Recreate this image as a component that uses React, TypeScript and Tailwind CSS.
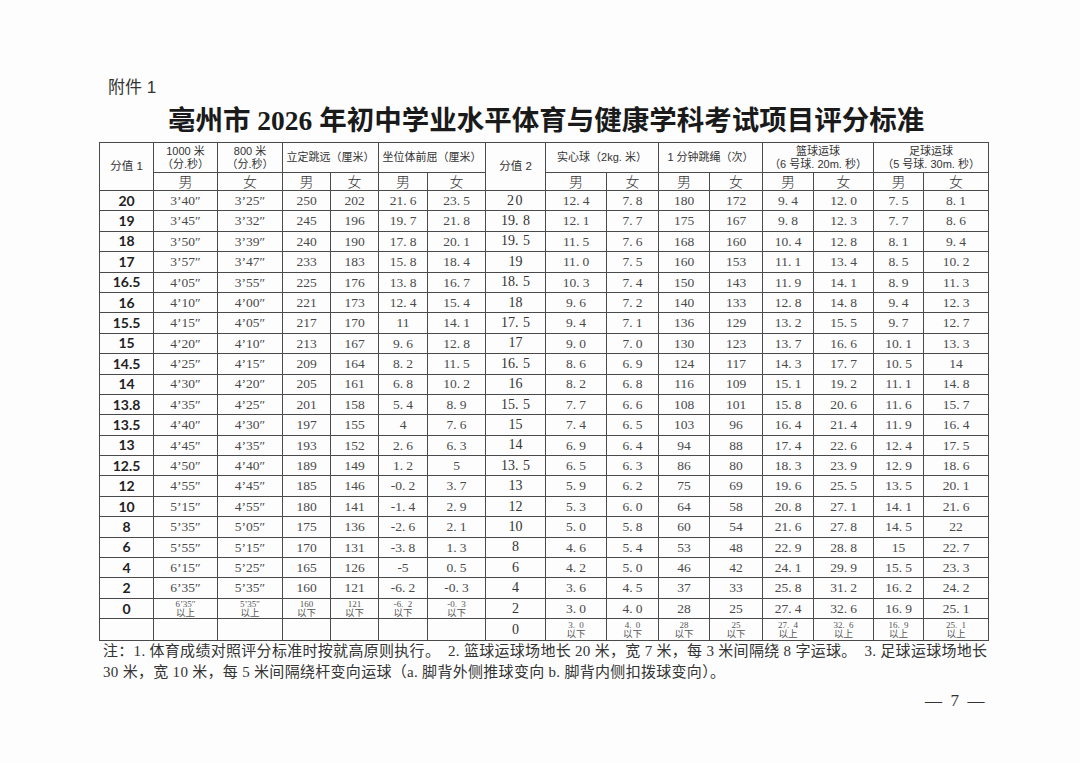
import React from "react";

const serif = "font-['Liberation_Serif','Noto_Sans_CJK_SC',serif]";
const sans = "font-['Liberation_Sans','Noto_Sans_CJK_SC',sans-serif]";

const colWidths = [54, 64, 65, 48, 48, 49, 58, 60, 61, 52, 51, 53, 51, 60, 50, 65];

// left half: 分值1, 1000米男, 800米女, 跳远男/女, 坐位体前屈男/女
const leftRows: string[][] = [
  ["20", "3’40″", "3’25″", "250", "202", "21.6", "23.5"],
  ["19", "3’45″", "3’32″", "245", "196", "19.7", "21.8"],
  ["18", "3’50″", "3’39″", "240", "190", "17.8", "20.1"],
  ["17", "3’57″", "3’47″", "233", "183", "15.8", "18.4"],
  ["16.5", "4’05″", "3’55″", "225", "176", "13.8", "16.7"],
  ["16", "4’10″", "4’00″", "221", "173", "12.4", "15.4"],
  ["15.5", "4’15″", "4’05″", "217", "170", "11", "14.1"],
  ["15", "4’20″", "4’10″", "213", "167", "9.6", "12.8"],
  ["14.5", "4’25″", "4’15″", "209", "164", "8.2", "11.5"],
  ["14", "4’30″", "4’20″", "205", "161", "6.8", "10.2"],
  ["13.8", "4’35″", "4’25″", "201", "158", "5.4", "8.9"],
  ["13.5", "4’40″", "4’30″", "197", "155", "4", "7.6"],
  ["13", "4’45″", "4’35″", "193", "152", "2.6", "6.3"],
  ["12.5", "4’50″", "4’40″", "189", "149", "1.2", "5"],
  ["12", "4’55″", "4’45″", "185", "146", "-0.2", "3.7"],
  ["10", "5’15″", "4’55″", "180", "141", "-1.4", "2.9"],
  ["8", "5’35″", "5’05″", "175", "136", "-2.6", "2.1"],
  ["6", "5’55″", "5’15″", "170", "131", "-3.8", "1.3"],
  ["4", "6’15″", "5’25″", "165", "126", "-5", "0.5"],
  ["2", "6’35″", "5’35″", "160", "121", "-6.2", "-0.3"],
  ["0", "6’35″|以上", "5’35″|以上", "160|以下", "121|以下", "-6.2|以下", "-0.3|以下"],
  ["", "", "", "", "", "", ""],
];

// right half: 分值2, 实心球, 跳绳, 篮球, 足球
const rightRows: string[][] = [
  ["20", "12.4", "7.8", "180", "172", "9.4", "12.0", "7.5", "8.1"],
  ["19.8", "12.1", "7.7", "175", "167", "9.8", "12.3", "7.7", "8.6"],
  ["19.5", "11.5", "7.6", "168", "160", "10.4", "12.8", "8.1", "9.4"],
  ["19", "11.0", "7.5", "160", "153", "11.1", "13.4", "8.5", "10.2"],
  ["18.5", "10.3", "7.4", "150", "143", "11.9", "14.1", "8.9", "11.3"],
  ["18", "9.6", "7.2", "140", "133", "12.8", "14.8", "9.4", "12.3"],
  ["17.5", "9.4", "7.1", "136", "129", "13.2", "15.5", "9.7", "12.7"],
  ["17", "9.0", "7.0", "130", "123", "13.7", "16.6", "10.1", "13.3"],
  ["16.5", "8.6", "6.9", "124", "117", "14.3", "17.7", "10.5", "14"],
  ["16", "8.2", "6.8", "116", "109", "15.1", "19.2", "11.1", "14.8"],
  ["15.5", "7.7", "6.6", "108", "101", "15.8", "20.6", "11.6", "15.7"],
  ["15", "7.4", "6.5", "103", "96", "16.4", "21.4", "11.9", "16.4"],
  ["14", "6.9", "6.4", "94", "88", "17.4", "22.6", "12.4", "17.5"],
  ["13.5", "6.5", "6.3", "86", "80", "18.3", "23.9", "12.9", "18.6"],
  ["13", "5.9", "6.2", "75", "69", "19.6", "25.5", "13.5", "20.1"],
  ["12", "5.3", "6.0", "64", "58", "20.8", "27.1", "14.1", "21.6"],
  ["10", "5.0", "5.8", "60", "54", "21.6", "27.8", "14.5", "22"],
  ["8", "4.6", "5.4", "53", "48", "22.9", "28.8", "15", "22.7"],
  ["6", "4.2", "5.0", "46", "42", "24.1", "29.9", "15.5", "23.3"],
  ["4", "3.6", "4.5", "37", "33", "25.8", "31.2", "16.2", "24.2"],
  ["2", "3.0", "4.0", "28", "25", "27.4", "32.6", "16.9", "25.1"],
  ["0", "3.0|以下", "4.0|以下", "28|以下", "25|以下", "27.4|以上", "32.6|以上", "16.9|以上", "25.1|以上"],
];

function Num({ v, wide }: { v: string; wide?: boolean }) {
  const parts = v.split(".");
  if (parts.length < 2) return <>{v}</>;
  return (
    <>
      {parts[0]}
      <span className={wide ? "inline-block w-[8px] text-left" : "inline-block w-[6.5px] text-left"}>.</span>
      {parts[1]}
    </>
  );
}

const cell = "border border-[#4a4a4a] p-0 text-center align-middle leading-none";

function DataCell({ v }: { v: string }) {
  if (v.includes("|")) {
    const [top, bottom] = v.split("|");
    return (
      <td className={cell}>
        <div className={`${serif} text-[9px] leading-[9px] text-[#555]`}>
          <div>
            <Num v={top} />
          </div>
          <div className="text-[9.5px]">{bottom}</div>
        </div>
      </td>
    );
  }
  return (
    <td className={`${cell} ${serif} text-[13.5px] text-[#4a4a4a]`}>
      <Num v={v} />
    </td>
  );
}

function HeadCell({ children, colSpan, rowSpan, className = "" }: { children: React.ReactNode; colSpan?: number; rowSpan?: number; className?: string }) {
  return (
    <td colSpan={colSpan} rowSpan={rowSpan} className={`${cell} text-[#333] ${className}`}>
      {children}
    </td>
  );
}

const mf = ["男", "女", "男", "女", "男", "女", "男", "女", "男", "女", "男", "女", "男", "女"];

export default function App() {
  return (
    <div className="w-[1080px] h-[763px] overflow-hidden bg-[#fdfdfd] pt-[77px] pl-[99px] text-[#2a2a2a]">
      <div className={`${sans} ml-[9px] text-[17px] leading-[22px] text-[#333]`}>附件 1</div>
      <h1 className={`${serif} ml-[69px] mt-[4px] text-[27.5px] leading-[36px] font-bold text-[#1a1a1a] whitespace-nowrap`}>
        亳州市 2026 年初中学业水平体育与健康学科考试项目评分标准
      </h1>

      <table className="mt-[3px] table-fixed border-collapse w-[889px] border-[1.5px] border-[#444]">
        <colgroup>
          {colWidths.map((w, i) => (
            <col key={i} style={{ width: w }} />
          ))}
        </colgroup>
        <tbody>
          <tr className="h-[30px]">
            <HeadCell rowSpan={2} className={`${sans} text-[11.5px]`}>分值 1</HeadCell>
            <HeadCell className={`${sans} text-[11px] !leading-[13px]`}>
              <div>1000 米</div>
              <div>（分.秒）</div>
            </HeadCell>
            <HeadCell className={`${sans} text-[11px] !leading-[13px]`}>
              <div>800 米</div>
              <div>（分.秒）</div>
            </HeadCell>
            <HeadCell colSpan={2} className={`${sans} text-[11px] whitespace-nowrap`}>立定跳远（厘米）</HeadCell>
            <HeadCell colSpan={2} className={`${sans} text-[11px] whitespace-nowrap`}>坐位体前屈（厘米）</HeadCell>
            <HeadCell rowSpan={2} className={`${sans} text-[11.5px]`}>分值 2</HeadCell>
            <HeadCell colSpan={2} className={`${sans} text-[11px] whitespace-nowrap`}>实心球（2kg.  米）</HeadCell>
            <HeadCell colSpan={2} className={`${sans} text-[11px] whitespace-nowrap`}>1 分钟跳绳（次）</HeadCell>
            <HeadCell colSpan={2} className={`${sans} text-[11px] !leading-[13px] whitespace-nowrap`}>
              <div>篮球运球</div>
              <div>（6 号球. 20m. 秒）</div>
            </HeadCell>
            <HeadCell colSpan={2} className={`${sans} text-[11px] !leading-[13px] whitespace-nowrap`}>
              <div>足球运球</div>
              <div>（5 号球. 30m. 秒）</div>
            </HeadCell>
          </tr>
          <tr className="h-[18px]">
            {mf.map((s, i) => (
              <HeadCell key={i} className={`${sans} text-[14px] font-light`}>
                {s}
              </HeadCell>
            ))}
          </tr>
          {leftRows.map((l, i) => {
            const last = i === leftRows.length - 1;
            return (
              <tr key={i} className={last ? "h-[22px]" : "h-[20.4px]"}>
                <td className={`${cell} font-['Lato',sans-serif] font-bold text-[14px] text-[#222]`}>{l[0]}</td>
                {l.slice(1).map((v, j) => (
                  <DataCell key={j} v={v} />
                ))}
                <td className={`${cell} ${serif} text-[14px] text-[#333] ${i === 0 ? "tracking-[1.5px]" : ""}`}>
                  <Num v={rightRows[i][0]} wide />
                </td>
                {rightRows[i].slice(1).map((v, j) => (
                  <DataCell key={j} v={v} />
                ))}
              </tr>
            );
          })}
        </tbody>
      </table>

      <div className={`${serif} ml-[4px] text-[15px] leading-[21px] tracking-[0.3px] text-[#333] whitespace-nowrap`}>
        <div>注：1. 体育成绩对照评分标准时按就高原则执行。　2. 篮球运球场地长 20 米，宽 7 米，每 3 米间隔绕 8 字运球。　3. 足球运球场地长</div>
        <div>30 米，宽 10 米，每 5 米间隔绕杆变向运球（a. 脚背外侧推球变向 b. 脚背内侧扣拨球变向）。</div>
      </div>
      <div className={`${serif} ml-[826px] mt-[8px] text-[17px] leading-[20px] text-[#333] whitespace-pre`}>—  7  —</div>
    </div>
  );
}
